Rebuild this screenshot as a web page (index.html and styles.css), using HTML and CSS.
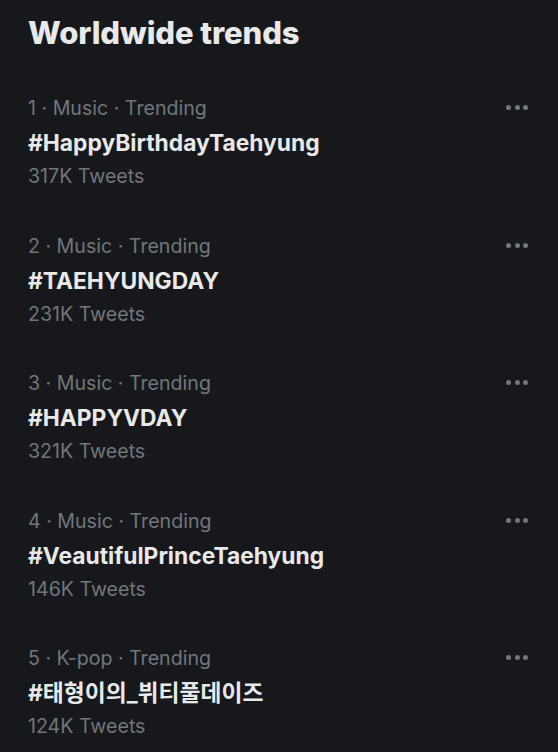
FILE: index.html
```html
<!DOCTYPE html>
<html lang="en">
<head>
<meta charset="utf-8">
<title>Worldwide trends</title>
<link rel="stylesheet" href="styles.css">
</head>
<body>
<section class="panel">
  <h2 class="title">Worldwide trends</h2>
  <ul class="trends">
    <li class="trend">
      <div class="meta">1 · Music · Trending</div>
      <div class="name">#HappyBirthdayTaehyung</div>
      <div class="count">317K Tweets</div>
      <span class="more" aria-label="More"><i></i><i></i><i></i></span>
    </li>
    <li class="trend">
      <div class="meta">2 · Music · Trending</div>
      <div class="name">#TAEHYUNGDAY</div>
      <div class="count">231K Tweets</div>
      <span class="more" aria-label="More"><i></i><i></i><i></i></span>
    </li>
    <li class="trend">
      <div class="meta">3 · Music · Trending</div>
      <div class="name">#HAPPYVDAY</div>
      <div class="count">321K Tweets</div>
      <span class="more" aria-label="More"><i></i><i></i><i></i></span>
    </li>
    <li class="trend">
      <div class="meta">4 · Music · Trending</div>
      <div class="name">#VeautifulPrinceTaehyung</div>
      <div class="count">146K Tweets</div>
      <span class="more" aria-label="More"><i></i><i></i><i></i></span>
    </li>
    <li class="trend">
      <div class="meta">5 · K-pop · Trending</div>
      <div class="name">#태형이의_뷔티풀데이즈</div>
      <div class="count">124K Tweets</div>
      <span class="more" aria-label="More"><i></i><i></i><i></i></span>
    </li>
  </ul>
</section>
</body>
</html>
```

FILE: styles.css
```css
* { box-sizing: border-box; }
html, body {
  margin: 0;
  padding: 0;
  background: #17181c;
}
body {
  width: 558px;
  height: 752px;
  overflow: hidden;
  font-family: Inter, "Noto Sans CJK KR", sans-serif;
}
.panel {
  background: #17181c;
  border-radius: 14px 14px 0 0;
  height: 752px;
}
.title {
  margin: 0;
  padding: 12px 28px 0;
  font-size: 31px;
  line-height: 41px;
  font-weight: 800;
  color: #e7e9ea;
  letter-spacing: -0.1px;
}
.trends {
  list-style: none;
  margin: 0;
  padding: 38px 0 0;
}
.trend {
  position: relative;
  height: 137.5px;
  padding: 0 28px;
}
.meta, .count {
  font-size: 19.6px;
  color: #71767b;
  font-weight: 400;
}
.meta { line-height: 35px; }
.name {
  font-size: 22.8px;
  line-height: 33px;
  font-weight: 700;
  color: #e7e9ea;
}
.count { line-height: 34px; }
.more {
  position: absolute;
  right: 30px;
  top: 14px;
  display: flex;
  gap: 3.5px;
}
.more i {
  display: block;
  width: 5px;
  height: 5px;
  border-radius: 50%;
  background: #71767b;
}
```
